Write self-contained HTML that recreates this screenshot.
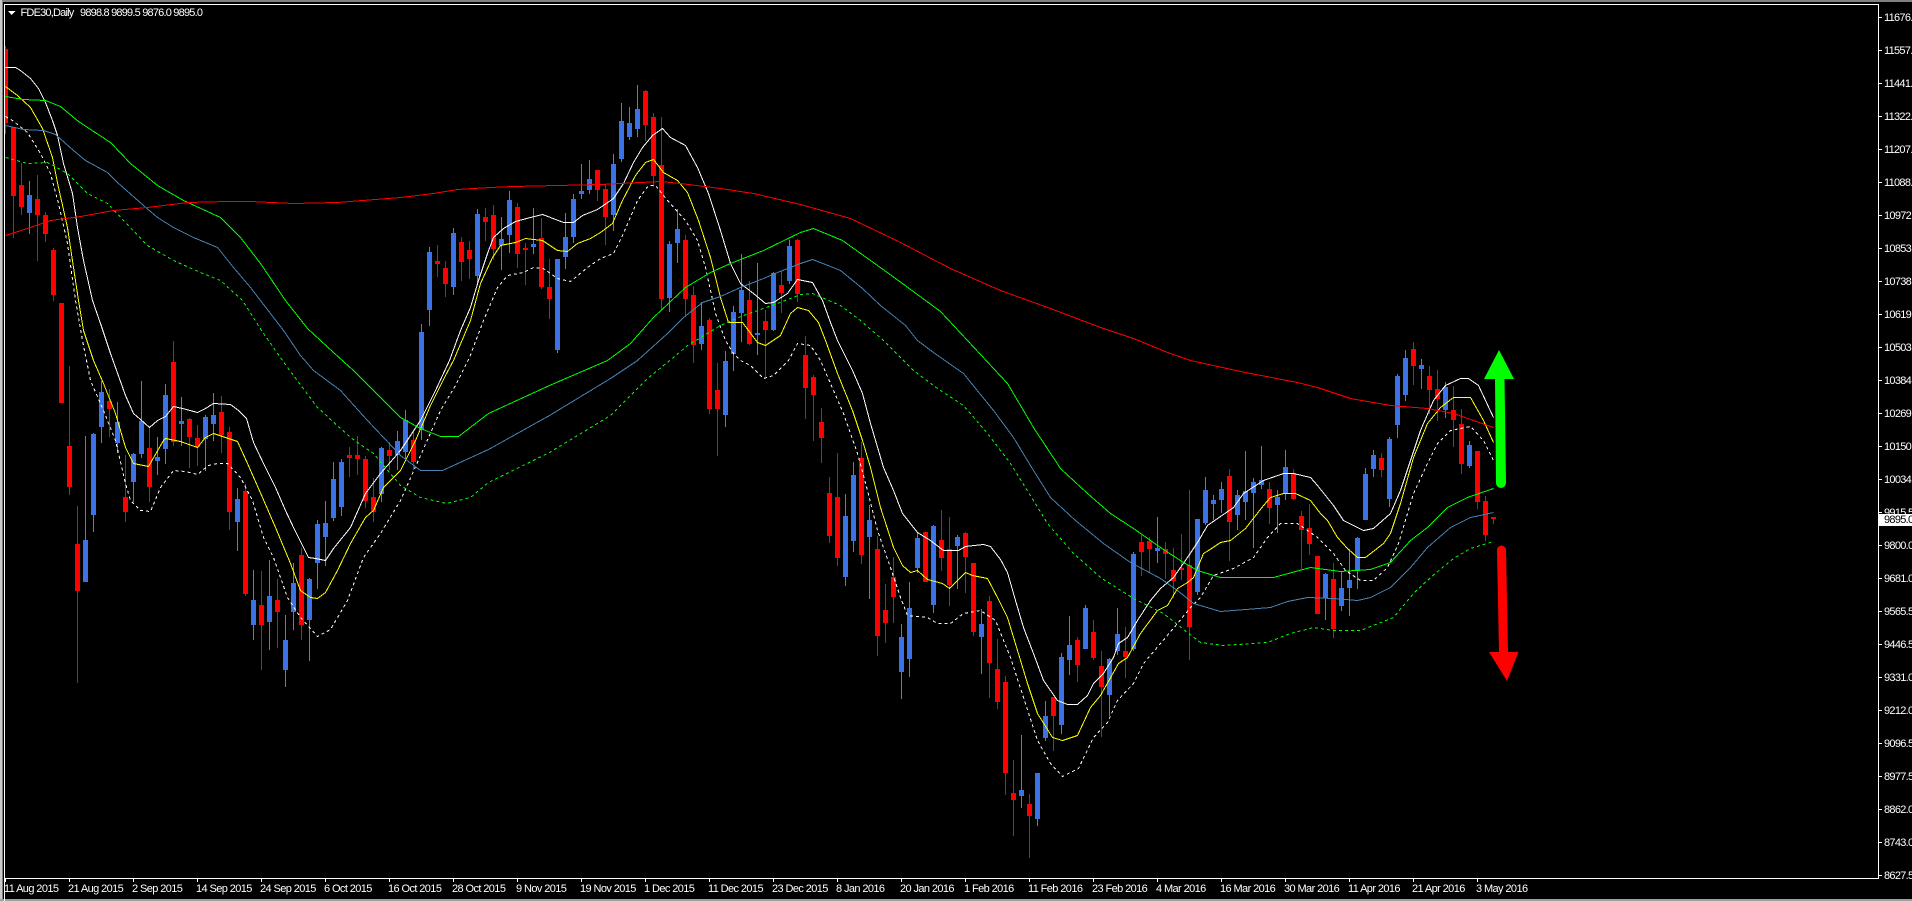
<!DOCTYPE html>
<html lang="en">
<head>
<meta charset="utf-8">
<title>FDE30,Daily</title>
<style>
html,body{margin:0;padding:0;background:#000;width:1912px;height:901px;overflow:hidden}
svg{display:block}
text{font-family:"Liberation Sans",sans-serif;font-size:11px;fill:#fff;letter-spacing:-.8px}
.p{letter-spacing:-.7px}
.t{letter-spacing:-.6px}
polyline{fill:none;shape-rendering:crispEdges;stroke-width:1}
</style>
</head>
<body>
<svg xmlns="http://www.w3.org/2000/svg" width="1912" height="901" viewBox="0 0 1912 901">
<defs><clipPath id="c"><rect x="5" y="5" width="1873" height="873"/></clipPath></defs>
<rect width="1912" height="901" fill="#000"/>
<g clip-path="url(#c)">
<g transform="translate(.5 0)" fill="none" shape-rendering="crispEdges">
<path stroke="#ff0000" stroke-width="1" d="M5 46V134M13 127V238M21 163V215M37 175V261M45 212V242M53 248V301M61 303V403M69 366V495M77 506V683M109 389V437M125 455V522M149 428V502M173 341V446M189 418V468M197 425V466M221 396V453M229 427V530M245 484V596M261 571V670M277 579V648M301 548V640M349 447V477M357 436V475M365 456V508M373 478V522M389 442V470M413 430V470M437 245V277M445 261V297M461 237V281M469 241V279M485 208V241M493 205V260M517 203V268M525 243V285M541 218V289M549 259V319M597 170V201M605 184V245M645 90V141M653 113V187M661 117V310M685 235V317M693 286V363M709 318V414M717 363V456M749 281V345M765 310V377M781 271V313M797 239V302M805 336V419M813 375V441M821 408V463M829 477V543M837 453V566M861 442V564M877 536V656M885 584V643M893 557V623M925 532V582M941 510V571M949 517V606M965 532V593M973 563V636M989 596V698M997 639V709M1005 676V795M1013 760V836M1029 794V858M1053 697V751M1077 637V682M1093 620V660M1101 651V737M1125 627V678M1141 535V576M1149 537V572M1165 542V579M1173 548V598M1181 534V580M1189 490V660M1229 469V561M1269 482V524M1293 469V500M1301 511V569M1309 504V555M1317 556V614M1333 563V638M1381 453V477M1413 342V385M1429 366V414M1437 370V421M1453 386V447M1461 409V474M1477 451V509M1485 496V541M1493 517V524"/>
<path stroke="#1e90ff" stroke-width="1" d="M29 181V234M85 436V582M93 433V532M101 381V443M117 402V453M133 453V502M141 381V458M157 437V475M165 384V464M181 397V446M205 415V471M213 393V441M237 488V551M253 570V640M269 560V650M285 615V687M293 563V630M309 578V661M317 520V589M325 501V566M333 462V521M341 459V516M381 447V502M397 431V470M405 410V460M421 324V440M429 247V326M453 228V295M477 209V283M501 217V270M509 191V253M533 208V254M557 259V353M565 213V269M573 194V243M581 164V199M589 160V194M613 154V231M621 103V162M629 107V140M637 85V137M669 241V312M677 209V263M701 302V350M725 351V427M733 306V371M741 254V342M757 263V355M773 272V331M789 240V284M845 494V586M853 462V552M869 505V599M901 624V699M909 582V677M917 532V573M933 525V613M957 535V589M981 609V674M1021 735V808M1037 773V826M1045 701V741M1061 653V734M1069 616V675M1085 605V649M1109 658V716M1117 608V655M1133 552V651M1157 517V563M1197 519V595M1205 477V525M1213 495V520M1221 482V513M1237 490V530M1245 451V520M1253 478V548M1261 446V489M1277 490V533M1285 450V500M1325 573V620M1341 572V611M1349 549V616M1357 537V589M1365 468V520M1373 450V477M1389 437V507M1397 374V438M1405 350V401M1421 359V389M1445 382V418M1469 441V468"/>
<path stroke="#ff0000" stroke-width="5" d="M5 49V123M13 127V196M21 185V207M37 199V215M45 215V234M53 250V295M61 303V403M69 446V487M77 544V591M109 401V409M125 497V512M149 448V487M173 362V442M189 419V437M197 438V447M221 412V435M229 432V512M245 491V594M261 605V625M277 600V612M301 555V625M349 455V458M357 455V459M365 459V501M373 497V512M389 450V456M413 440V462M437 261V264M445 268V284M461 242V262M469 250V259M485 217V222M493 215V249M517 207V254M525 248V250M541 238V287M549 287V299M597 170V190M605 189V217M645 91V125M653 117V176M661 165V299M685 240V299M693 295V345M709 320V409M717 390V409M749 300V344M765 321V330M781 285V293M797 240V294M805 355V388M813 377V395M821 422V438M829 493V536M837 497V558M861 458V555M877 549V636M885 610V623M893 577V597M925 532V582M941 540V558M949 549V585M965 533V557M973 563V632M989 601V663M997 669V702M1005 682V773M1013 793V800M1029 804V816M1053 697V716M1077 640V665M1093 632V658M1101 666V687M1125 651V657M1141 542V552M1149 541V549M1165 549V554M1173 570V581M1181 568V570M1189 565V627M1229 476V522M1269 489V508M1293 473V499M1301 516V530M1309 528V544M1317 556V614M1333 579V629M1381 458V470M1413 349V366M1429 376V390M1437 389V399M1453 410V420M1461 424V464M1477 451V502M1485 501V535M1493 517V519"/>
<path stroke="#3b73e6" stroke-width="5" d="M29 195V213M85 540V582M93 434V515M101 392V427M117 422V443M133 454V482M141 421V454M157 457V461M165 395V449M181 421V424M205 417V439M213 415V424M237 499V522M253 600V625M269 596V622M285 640V670M293 583V612M309 579V620M317 524V563M325 523V537M333 479V518M341 462V507M381 448V494M397 441V455M405 420V452M421 332V430M429 252V310M453 233V287M477 214V276M501 239V245M509 200V235M533 244V247M557 259V350M565 237V257M573 199V237M581 191V194M589 179V190M613 164V215M621 121V159M629 123V137M637 109V129M669 244V298M677 229V243M701 326V344M725 361V415M733 312V354M741 290V313M757 333V335M773 273V330M789 246V281M845 516V577M853 475V541M869 520V537M901 637V672M909 608V659M917 538V568M933 526V605M957 537V546M981 624V637M1021 790V796M1037 773V819M1045 716V738M1061 657V725M1069 645V660M1085 608V649M1109 659V695M1117 634V651M1133 554V649M1157 548V551M1197 519V592M1205 490V523M1213 500V504M1221 489V500M1237 495V515M1245 491V502M1253 482V493M1261 480V485M1277 497V505M1285 467V493M1325 574V598M1341 588V606M1349 580V588M1357 538V571M1365 474V520M1373 455V469M1389 439V499M1397 376V425M1405 358V395M1421 365V369M1445 387V410M1469 445V466"/>
</g>
<g transform="translate(.5 .5)">
<polyline stroke="#ffffff" points="5,67 15,67 20,70 30,78 38,88 45,102 52,120 57,135 63,163 72,193 77,227 83,260 92,300 100,323 110,353 115,367 125,395 133,413 140,419 149,427 157,420 165,416 173,406 182,408 197,412 205,408 213,403 230,404 238,410 246,418 253,442 263,463 275,487 285,510 293,527 308,557 315,558 325,560 333,548 350,527 365,493 380,473 400,450 420,420 435,390 449,360 460,330 470,307 478,280 487,253 493,237 503,228 515,221 530,217 542,214 550,217 563,222 573,222 582,215 597,209 613,198 623,183 633,162 642,147 652,135 662,128 670,137 685,145 697,167 708,193 720,230 730,263 740,283 753,293 765,303 773,302 787,293 797,279 812,282 822,300 830,322 837,340 852,370 862,393 870,423 883,467 893,490 902,513 917,532 930,540 943,550 958,550 965,546 983,544 990,546 1000,559 1007,572 1015,600 1023,627 1033,653 1043,680 1057,700 1067,704 1077,704 1087,695 1093,683 1103,673 1113,657 1118,643 1127,637 1137,620 1150,600 1160,588 1173,577 1187,557 1197,542 1207,525 1233,507 1243,493 1263,480 1283,473 1293,473 1310,477 1317,485 1333,505 1343,520 1363,530 1373,528 1390,513 1400,490 1410,460 1420,430 1433,400 1445,385 1460,378 1468,378 1478,385 1493,417"/>
<polyline stroke="#ffff00" points="5,86 17,95 30,107 42,128 52,157 58,187 67,227 73,267 78,300 83,330 93,360 103,383 115,413 125,447 133,463 148,466 163,440 165,438 180,441 197,447 205,437 213,433 237,441 247,463 262,497 275,527 290,563 300,590 310,597 317,598 325,592 337,570 350,543 365,517 373,510 383,487 400,470 415,440 430,405 445,375 453,360 470,320 480,283 492,257 500,245 515,242 525,238 533,239 542,240 557,250 567,251 577,243 590,238 600,232 612,223 622,200 635,175 645,162 653,159 663,172 677,180 687,192 698,220 710,257 720,297 728,322 742,322 757,342 765,345 780,335 790,313 797,307 808,310 818,322 825,340 837,373 852,410 862,440 870,467 880,507 893,547 902,565 910,572 917,570 927,579 942,583 949,588 965,572 972,575 987,578 997,597 1007,617 1017,650 1027,683 1037,713 1052,737 1062,740 1077,735 1090,707 1100,695 1118,663 1127,657 1140,633 1157,610 1167,605 1177,588 1187,582 1193,577 1203,553 1208,550 1220,542 1230,540 1245,528 1263,505 1270,497 1283,493 1295,493 1310,500 1320,513 1327,520 1337,537 1347,548 1357,557 1365,557 1383,543 1390,533 1400,503 1413,457 1427,423 1440,407 1453,397 1470,397 1483,420 1493,442"/>
<polyline stroke="#ffffff" stroke-dasharray="3 3" points="5,116 12,120 27,132 40,153 50,173 58,203 67,243 75,300 82,340 90,380 103,410 115,440 125,483 130,500 140,510 150,511 160,487 173,470 185,471 197,474 208,465 217,463 227,463 240,477 252,500 263,537 273,557 287,597 300,617 317,636 330,629 347,600 363,557 380,533 400,500 420,455 440,410 455,385 469,357 483,320 497,287 507,275 523,272 533,267 543,268 557,278 570,281 587,267 600,258 613,253 623,233 637,200 648,185 655,185 667,200 685,220 697,240 705,267 715,313 725,340 733,353 740,360 750,365 763,378 773,375 788,360 797,343 810,345 820,360 830,383 843,413 857,453 867,490 877,530 890,567 900,597 907,615 927,617 937,623 950,623 963,613 980,610 995,620 1010,657 1023,697 1037,740 1050,763 1062,776 1078,768 1093,737 1107,722 1117,700 1133,683 1143,663 1160,643 1177,623 1190,607 1200,597 1213,575 1233,568 1253,557 1267,537 1280,523 1297,523 1317,537 1333,553 1345,570 1360,580 1373,580 1387,567 1398,543 1413,493 1427,463 1437,443 1450,430 1470,426 1483,440 1493,460"/>
<polyline stroke="#4682b4" points="5,125 23,129 43,130 55,134 73,150 85,160 107,172 117,182 143,205 157,217 173,227 193,237 217,247 233,267 250,287 260,300 283,330 300,355 313,370 340,390 367,420 400,455 420,470 442,470 488,449 549,415 610,378 637,360 667,333 683,317 702,302 720,296 740,287 763,278 777,272 800,263 812,259 830,266 840,270 862,288 880,305 905,325 917,340 933,352 963,373 993,410 1013,437 1033,470 1050,497 1075,520 1103,543 1130,562 1160,578 1177,590 1193,603 1220,611 1233,610 1270,607 1287,601 1307,597 1333,598 1357,600 1370,597 1390,587 1410,567 1427,547 1450,527 1470,517 1493,512"/>
<polyline stroke="#00ff00" points="5,96 23,99 45,100 60,106 78,121 110,142 130,163 157,185 183,200 220,217 240,237 260,263 285,300 307,328 333,352 353,370 400,417 420,428 440,436 458,436 488,413 549,385 607,360 630,343 653,317 685,287 710,272 730,263 763,250 800,232 813,228 842,240 891,275 940,311 967,340 1007,383 1033,427 1060,468 1087,493 1110,513 1133,528 1160,547 1183,562 1197,570 1220,577 1273,577 1310,567 1340,571 1370,569 1390,562 1410,540 1427,527 1447,507 1467,497 1493,488"/>
<polyline stroke="#00ff00" stroke-dasharray="3 3" points="5,157 27,163 47,162 67,173 87,193 107,203 125,222 147,245 173,260 200,272 220,280 242,300 263,333 287,367 317,407 350,437 373,453 400,485 420,497 446,503 470,497 488,482 549,452 610,415 647,378 673,357 687,345 720,325 743,315 777,303 800,294 812,293 840,305 860,320 883,340 900,357 913,370 937,388 963,405 987,433 1010,463 1033,500 1047,523 1073,553 1100,577 1133,598 1163,613 1187,632 1200,642 1223,645 1267,642 1290,633 1313,627 1333,630 1360,630 1393,617 1413,593 1430,577 1453,558 1470,548 1493,541"/>
<polyline stroke="#ff0000" points="5,235 30,227 50,220 80,216 113,210 147,207 187,202 227,201 250,201 293,203 337,202 400,197 433,193 457,189 490,187 513,186 600,184 660,181 680,183 720,188 753,193 800,204 850,218 900,242 950,268 1000,290 1050,308 1100,327 1133,338 1167,352 1190,360 1240,371 1297,382 1317,387 1350,398 1390,405 1427,408 1453,413 1493,427"/>
</g>
</g>
<path fill="#00ff00" d="M1499 350L1514 379H1504.5L1506 483A5 5 0 0 1 1496 483L1495 379H1484Z"/>
<path fill="#ff0000" d="M1497 550A4.5 4.5 0 0 1 1506 550L1508 652H1518.5L1507 681L1489 652H1499Z"/>
<g shape-rendering="crispEdges">
<rect x="0" y="0" width="1912" height="2" fill="#808080"/>
<rect x="0" y="0" width="2" height="901" fill="#c8c8c8"/>
<rect x="2" y="0" width="1" height="901" fill="#808080"/>
<rect x="0" y="899" width="1912" height="2" fill="#a0a0a0"/>
<path fill="none" stroke="#fff" d="M4.5 901V4.5H1878.5V878.5H4.5"/>
<path fill="none" stroke="#fff" d="M1879 17.5h3M1879 50.5h3M1879 83.5h3M1879 116.5h3M1879 149.5h3M1879 182.5h3M1879 215.5h3M1879 248.5h3M1879 281.5h3M1879 314.5h3M1879 347.5h3M1879 380.5h3M1879 413.5h3M1879 446.5h3M1879 479.5h3M1879 512.5h3M1879 545.5h3M1879 578.5h3M1879 611.5h3M1879 644.5h3M1879 677.5h3M1879 710.5h3M1879 743.5h3M1879 776.5h3M1879 809.5h3M1879 842.5h3M1879 875.5h3"/>
<path fill="none" stroke="#fff" d="M5.5 879v3M69.5 879v3M133.5 879v3M197.5 879v3M261.5 879v3M325.5 879v3M389.5 879v3M453.5 879v3M517.5 879v3M581.5 879v3M645.5 879v3M709.5 879v3M773.5 879v3M837.5 879v3M901.5 879v3M965.5 879v3M1029.5 879v3M1093.5 879v3M1157.5 879v3M1221.5 879v3M1285.5 879v3M1349.5 879v3M1413.5 879v3M1477.5 879v3"/>
</g>
<path fill="#fff" d="M8 11H15.5L11.7 15Z"/>
<text x="20.5" y="16">FDE30,Daily</text>
<text x="80" y="16">9898.8 9899.5 9876.0 9895.0</text>
<g class="p">
<text class="p" x="1884" y="21">11676.0</text>
<text class="p" x="1884" y="54">11557.0</text>
<text class="p" x="1884" y="87">11441.5</text>
<text class="p" x="1884" y="120">11322.5</text>
<text class="p" x="1884" y="153">11207.0</text>
<text class="p" x="1884" y="186">11088.0</text>
<text class="p" x="1884" y="219">10972.5</text>
<text class="p" x="1884" y="252">10853.5</text>
<text class="p" x="1884" y="285">10738.0</text>
<text class="p" x="1884" y="318">10619.0</text>
<text class="p" x="1884" y="351">10503.5</text>
<text class="p" x="1884" y="384">10384.5</text>
<text class="p" x="1884" y="417">10269.0</text>
<text class="p" x="1884" y="450">10150.0</text>
<text class="p" x="1884" y="483">10034.5</text>
<text class="p" x="1884" y="516">9915.5</text>
<text class="p" x="1884" y="549">9800.0</text>
<text class="p" x="1884" y="582">9681.0</text>
<text class="p" x="1884" y="615">9565.5</text>
<text class="p" x="1884" y="648">9446.5</text>
<text class="p" x="1884" y="681">9331.0</text>
<text class="p" x="1884" y="714">9212.0</text>
<text class="p" x="1884" y="747">9096.5</text>
<text class="p" x="1884" y="780">8977.5</text>
<text class="p" x="1884" y="813">8862.0</text>
<text class="p" x="1884" y="846">8743.0</text>
<text class="p" x="1884" y="879">8627.5</text>
</g>
<rect x="1879" y="514" width="33" height="12" fill="#fff" shape-rendering="crispEdges"/>
<text class="p" x="1884" y="523" style="fill:#000">9895.0</text>
<g class="t">
<text class="t" x="4" y="892">11 Aug 2015</text>
<text class="t" x="68" y="892">21 Aug 2015</text>
<text class="t" x="132" y="892">2 Sep 2015</text>
<text class="t" x="196" y="892">14 Sep 2015</text>
<text class="t" x="260" y="892">24 Sep 2015</text>
<text class="t" x="324" y="892">6 Oct 2015</text>
<text class="t" x="388" y="892">16 Oct 2015</text>
<text class="t" x="452" y="892">28 Oct 2015</text>
<text class="t" x="516" y="892">9 Nov 2015</text>
<text class="t" x="580" y="892">19 Nov 2015</text>
<text class="t" x="644" y="892">1 Dec 2015</text>
<text class="t" x="708" y="892">11 Dec 2015</text>
<text class="t" x="772" y="892">23 Dec 2015</text>
<text class="t" x="836" y="892">8 Jan 2016</text>
<text class="t" x="900" y="892">20 Jan 2016</text>
<text class="t" x="964" y="892">1 Feb 2016</text>
<text class="t" x="1028" y="892">11 Feb 2016</text>
<text class="t" x="1092" y="892">23 Feb 2016</text>
<text class="t" x="1156" y="892">4 Mar 2016</text>
<text class="t" x="1220" y="892">16 Mar 2016</text>
<text class="t" x="1284" y="892">30 Mar 2016</text>
<text class="t" x="1348" y="892">11 Apr 2016</text>
<text class="t" x="1412" y="892">21 Apr 2016</text>
<text class="t" x="1476" y="892">3 May 2016</text>
</g>
</svg>
</body>
</html>
